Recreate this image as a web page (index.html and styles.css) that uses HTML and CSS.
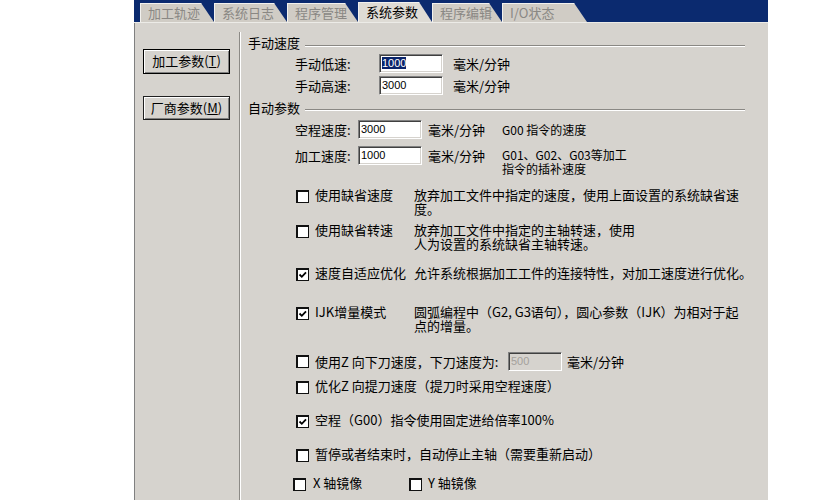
FILE: index.html
```html
<!DOCTYPE html>
<html>
<head>
<meta charset="utf-8">
<link rel="stylesheet" href="styles.css">
</head>
<body>
<div class="window">
  <div class="tabbar">
    <div class="tab t1">加工轨迹</div>
    <div class="tab t2">系统日志</div>
    <div class="tab t3">程序管理</div>
    <div class="tab t4 active">系统参数</div>
    <div class="tab t5">程序编辑</div>
    <div class="tab t6">I/O状态</div>
  </div>
  <div class="body">
    <div class="side">
      <div class="btn btn-default">加工参数(<u>T</u>)</div>
      <div class="btn btn-vendor">厂商参数(<u>M</u>)</div>
    </div>
    <div class="main">
      <div class="group g-manual"><span class="glabel">手动速度</span><span class="groove"></span></div>
      <div class="frow r-low">
        <span class="flabel fl-manual">手动低速:</span>
        <span class="field"><span class="sel">1000</span></span>
        <span class="unit u-manual">毫米/分钟</span>
      </div>
      <div class="frow r-high">
        <span class="flabel fl-manual">手动高速:</span>
        <span class="field">3000</span>
        <span class="unit u-manual">毫米/分钟</span>
      </div>
      <div class="group g-auto"><span class="glabel">自动参数</span><span class="groove"></span></div>
      <div class="frow r-rapid">
        <span class="flabel fl-auto">空程速度:</span>
        <span class="field">3000</span>
        <span class="unit u-auto">毫米/分钟</span>
        <span class="fdesc">G00 指令的速度</span>
      </div>
      <div class="frow r-feed">
        <span class="flabel fl-auto">加工速度:</span>
        <span class="field">1000</span>
        <span class="unit u-auto">毫米/分钟</span>
        <span class="fdesc two">G01、G02、G03等加工<br>指令的插补速度</span>
      </div>

      <div class="crow c1">
        <span class="box"></span>
        <span class="clabel">使用缺省速度</span>
        <span class="desc">放弃加工文件中指定的速度，使用上面设置的系统缺省速<br>度。</span>
      </div>
      <div class="crow c2">
        <span class="box"></span>
        <span class="clabel">使用缺省转速</span>
        <span class="desc">放弃加工文件中指定的主轴转速，使用<br>人为设置的系统缺省主轴转速。</span>
      </div>
      <div class="crow c3">
        <span class="box checked"><svg viewBox="0 0 10 10" width="10" height="10"><path d="M1.5 4.5 L3.8 6.8 L8 2.3" fill="none" stroke="#000" stroke-width="1.8"/></svg></span>
        <span class="clabel">速度自适应优化</span>
        <span class="desc">允许系统根据加工工件的连接特性，对加工速度进行优化。</span>
      </div>
      <div class="crow c4">
        <span class="box checked"><svg viewBox="0 0 10 10" width="10" height="10"><path d="M1.5 4.5 L3.8 6.8 L8 2.3" fill="none" stroke="#000" stroke-width="1.8"/></svg></span>
        <span class="clabel">IJK增量模式</span>
        <span class="desc">圆弧编程中（G2, G3语句），圆心参数（IJK）为相对于起<br>点的增量。</span>
      </div>
      <div class="crow c5">
        <span class="box"></span>
        <span class="clabel wide">使用Z 向下刀速度，下刀速度为:</span>
        <span class="field disabled">500</span>
        <span class="unit u-z">毫米/分钟</span>
      </div>
      <div class="crow c6">
        <span class="box"></span>
        <span class="clabel free">优化Z 向提刀速度（提刀时采用空程速度）</span>
      </div>
      <div class="crow c7">
        <span class="box checked"><svg viewBox="0 0 10 10" width="10" height="10"><path d="M1.5 4.5 L3.8 6.8 L8 2.3" fill="none" stroke="#000" stroke-width="1.8"/></svg></span>
        <span class="clabel free">空程（G00）指令使用固定进给倍率100%</span>
      </div>
      <div class="crow c8">
        <span class="box"></span>
        <span class="clabel free">暂停或者结束时，自动停止主轴（需要重新启动）</span>
      </div>
      <div class="crow c9">
        <span class="box"></span>
        <span class="clabel mx">X 轴镜像</span>
        <span class="box"></span>
        <span class="clabel my">Y 轴镜像</span>
      </div>
    </div>
  </div>
</div>
</body>
</html>
```
FILE: styles.css
```css
* { box-sizing: border-box; }

body {
  margin: 0;
  background: #fff;
  font-family: "Noto Sans CJK SC", "Liberation Sans", sans-serif;
  font-size: 13px;
  color: #000;
}

.window {
  margin-left: 134px;
  width: 634px;
  height: 500px;
  background: #d6d3ce;
  display: flex;
  flex-direction: column;
  overflow: hidden;
}

/* tabs */
.tabbar {
  flex: none;
  height: 23px;
  background: #0b2a6f;
  border-bottom: 1px solid #ecebe7;
  display: flex;
  align-items: flex-end;
  padding-left: 6px;
}

.tab {
  height: 19px;
  line-height: 19px;
  padding-left: 8px;
  background: #d0ccc5;
  color: #8a8884;
  white-space: nowrap;
  clip-path: polygon(0 0, calc(100% - 13px) 0, 100% 100%, 0 100%);
  box-shadow: inset 1px 1px #f2f1ee;
}
.tab.active {
  height: 20px;
  line-height: 20px;
  background: #dedbd5;
  color: #000;
}
.t1 { width: 74px; }
.t2 { width: 73px; }
.t3 { width: 71px; }
.t4 { width: 74px; }
.t5 { width: 70px; }
.t6 { width: 85px; padding-left: 8px; }

/* body */
.body {
  flex: 1;
  display: flex;
  padding-top: 9px;
  border-left: 1px solid #808080;
}

.side {
  flex: none;
  width: 105px;
  border-right: 1px solid #8c8a86;
  padding: 17px 0 0 8px;
}

.btn {
  width: 87px;
  height: 25px;
  line-height: 22px;
  text-align: center;
  border: 1px solid #000;
  box-shadow: inset 1px 1px #fff, inset -1px -1px #808080;
  background: #d6d3ce;
  white-space: nowrap;
}
.btn u { text-decoration: underline; text-underline-offset: 1px; }
.btn-vendor {
  margin-top: 22px;
  height: 24px;
  line-height: 21px;
  border-color: #202020;
}

.main {
  flex: 1;
  border-left: 1px solid #fff;
  padding-top: 4px;
  display: flex;
  flex-direction: column;
}

/* group headers */
.group {
  display: flex;
  padding-left: 7px;
  margin-right: 23px;
  line-height: 14px;
  flex: none;
}
.g-manual { height: 18px; }
.g-auto { height: 19px; }
.groove {
  flex: 1;
  margin-left: 5px;
  height: 2px;
  border-top: 1px solid #8a8884;
  border-bottom: 1px solid #fff;
}
.g-manual .groove { margin-top: 9px; }
.g-auto .groove { margin-top: 8px; }

/* field rows */
.frow {
  display: flex;
  align-items: flex-start;
  line-height: 19px;
  padding-left: 54px;
  flex: none;
}
.r-low { height: 22px; }
.r-high { height: 25px; }
.r-rapid { height: 26px; }
.r-feed { height: 42px; }

.flabel { flex: none; }
.fl-manual { width: 84px; }
.fl-auto { width: 63px; }

.field {
  flex: none;
  display: block;
  width: 64px;
  height: 19px;
  background: #fff;
  border: 1px solid;
  border-color: #808080 #fff #fff #808080;
  box-shadow: inset 1px 1px #404040, inset -1px -1px #d6d3ce;
  font-family: "Liberation Sans", sans-serif;
  font-size: 11px;
  line-height: 17px;
  padding-left: 2px;
}
.sel {
  background: #0a246a;
  color: #fff;
}
.field.disabled {
  width: 54px;
  background: #d6d3ce;
  color: #a4a19c;
}

.unit { flex: none; }
.u-manual { margin-left: 10px; }
.u-auto { margin-left: 6px; width: 74px; }
.u-z { margin-left: 5px; line-height: 19px; }

.fdesc {
  font-size: 12px;
}
.fdesc.two {
  line-height: 14px;
  margin-top: 2px;
}

/* checkbox rows */
.crow {
  display: flex;
  align-items: flex-start;
  padding-left: 55px;
  line-height: 14px;
  flex: none;
}
.c1 { height: 35px; }
.c2 { height: 43px; }
.c3 { height: 39px; }
.c4 { height: 38px; }
.c5 { height: 36px; align-items: center; }
.c6 { height: 34px; }
.c7 { height: 34px; }
.c8 { height: 29px; }
.c9 { height: 24px; padding-left: 52px; }

.box {
  flex: none;
  width: 13px;
  height: 13px;
  margin-top: 2px;
  background: #fff;
  border-style: solid;
  border-width: 2px 1px 1px 2px;
  border-color: #111;
  display: flex;
  align-items: center;
  justify-content: center;
}
.c5 .box { margin-top: 0; }
.box svg { display: block; }

.clabel {
  flex: none;
  margin-left: 6px;
  width: 99px;
  white-space: nowrap;
}
.clabel.wide { width: 193px; line-height: 19px; }
.clabel.free { width: auto; }
.clabel.mx { margin-left: 7px; width: 96px; }
.clabel.my { margin-left: 6px; width: auto; }

.desc {
  white-space: nowrap;
}
```
